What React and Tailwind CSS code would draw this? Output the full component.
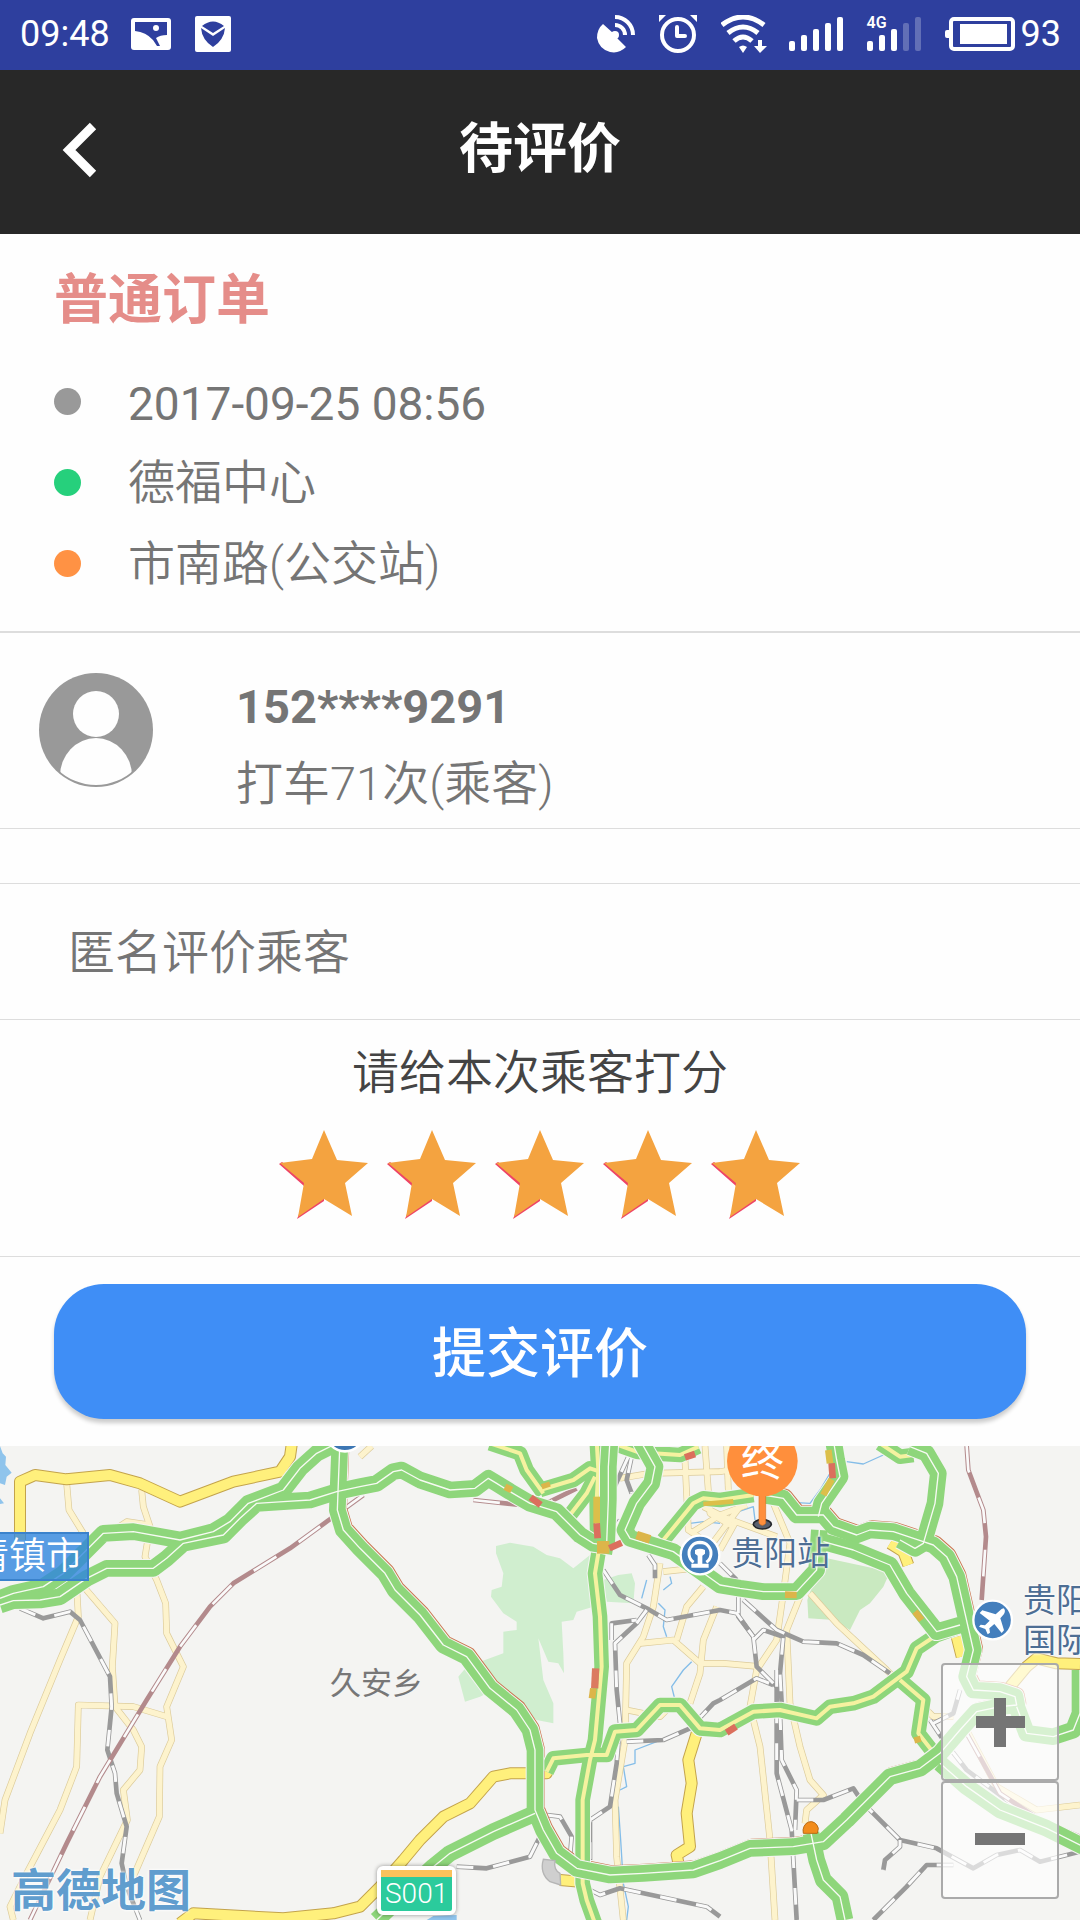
import React, { useState } from 'react';

const trip = [
  { text: '2017-09-25 08:56', dot: 'bg-[#999999]', style: 'pt-1 text-[46px]' },
  { text: '德福中心', dot: 'bg-[#26d07c]', style: 'font-[350]' },
  { text: '市南路(公交站)', dot: 'bg-[#ff9244]', style: 'font-[350]' },
];

// Map geometry, three units per pixel
const water = [
  '2540,65 2590,72 2650,45',
  '2490,100 2460,150 2430,190 2390,188',
  '2200,220 2260,200 2265,240',
  '2010,410 2015,430 1990,450',
  '1975,490 1995,510 1990,560 2000,590',
  '2075,665 2050,690 2015,740 2025,780',
  '1970,905 1905,930 1905,970 1870,980 1880,1040 1860,1050',
  '1855,1100 1862,1200 1870,1330 1885,1400 1880,1440',
  '1940,420 1925,475',
  '2070,250 2110,245 2160,250',
];

const lightRoads = [
  '200,130 207,210 250,280',
  '425,150 430,200 450,260 435,350 470,420 497,490 500,580 550,680 500,800 515,900 480,980 478,1130 400,1310',
  '350,265 380,245 450,255',
  '230,440 235,530 180,660 90,880 15,1080 0,1180',
  '255,445 345,550 337,680 345,800 400,870 425,920 420,990 370,1050 382,1140 300,1310 270,1440',
  '500,830 400,800 235,795 230,980 180,1110 80,1300 30,1400 40,1440',
  '1080,50 1115,18',
  '1980,370 1960,500 1930,590 1880,670 1875,900 1845,1080 1850,1250 1870,1440',
  '1860,115 1950,100 2160,95 2220,85',
  '2055,60 2065,270 2110,300',
  '2115,18 2130,220 2200,260',
  '1990,395 2080,385',
  '1920,610 2020,600 2100,670 2170,670 2280,680',
  '2110,440 2060,500 2030,600',
  '2150,500 2110,600 2100,700 2070,790',
  '1880,810 1980,830 2000,810',
  '2180,18 2185,150',
  '2080,275 2160,225 2240,195',
  '2110,200 2180,235 2330,290',
  '2130,320 2220,200',
  '2160,330 2210,240',
  '2320,190 2370,310 2350,460 2330,600 2270,690 2250,800 2280,920 2310,1200 2325,1440',
  '2400,470 2360,570 2370,790 2400,920 2430,1020 2470,1065 2420,1110 2415,1150',
  '2430,460 2510,550 2660,690 2800,830 2860,830',
  '2900,870 2990,1040 3110,1110 3240,1095',
];

const yellowRoads = [
  '60,300 60,125 105,105 200,118 330,105 420,130 540,185 700,125 840,95 870,50 877,0',
  '540,1450 580,1420 850,1435 1000,1420 1080,1400 1140,1340 1210,1260 1260,1200 1330,1130 1410,1090 1480,1010 1530,1000 1640,1000 1660,960',
  '2090,880 2065,960 2075,1030 2060,1120 2070,1220 2030,1245 2040,1290',
  '1680,1320 1740,1325',
  '1840,880 1830,930 1800,940',
  '2670,310 2710,335 2725,375',
  '2870,590 2885,650',
  '3030,740 3080,680 3110,655 3170,670 3240,672',
];

const greyRails = [
  '60,505 130,535 210,515 240,540 330,710 335,800 322,930 345,1000 350,1060 380,1160 365,1270 380,1340 420,1440',
  '1885,50 1830,170',
  '1895,50 1880,120 1895,160',
  '1860,240 1835,280',
  '1945,345 1965,375 1965,415',
  '1810,390 1860,465 1940,505 2000,540 2160,510 2210,520 2260,590 2270,680 2330,740',
  '1940,510 1910,550 1845,610 1850,750 1860,850 1850,970 1830,1100 1770,1140 1770,1260',
  '1835,600 1835,550 1910,540',
  '1880,905 1990,900 2070,865 2140,790 2160,780 2270,715 2320,735',
  '1370,1280 1460,1285 1590,1250 1620,1190',
  '1640,1125 1680,1130 1715,1190 1710,1250',
  '1770,1350 1800,1365 1860,1345 2120,1400 2160,1430',
  '2160,370 2210,420',
  '2215,470 2215,530 2260,590',
  '2230,480 2330,570 2410,605 2510,610 2590,645 2670,700',
  '2260,600 2290,570 2350,590 2340,700 2345,790',
  '2330,690 2330,1000 2375,1170 2390,1440',
  '2340,820 2345,960 2390,1050 2385,1170',
  '2390,1080 2470,1080 2560,1045 2590,1090 2700,1200 2810,1225 2920,1285 2990,1245 3060,1230 3120,1265 3240,1235',
  '2700,1200 2700,1220 2655,1260 2650,1290',
  '2860,1275 2780,1275 2720,1340 2620,1440',
  '2790,840 2830,900 2900,990 3100,1140',
  '2800,850 2860,820 2880,750',
];

const purpleRails = [
  '1090,165 980,245 870,325 700,430 630,500 540,620 440,780 300,1010 200,1210 90,1440',
  '1420,180 1560,195 1650,185 1730,145',
  '2900,18 2905,90 2950,210 2958,290 2945,480',
  '2900,880 3000,1060 3120,1140 3240,1190',
];

// Ring road and expressways with a white median
const motorways = [
  '0,475 40,460 130,440 190,400 250,340 310,280 400,275 540,300 640,275 690,245 745,190 850,150 900,85 950,40 1010,10',
  '0,495 40,482 120,480 180,470 260,415 320,385 460,385 500,355 550,310 670,285 720,235 770,190 850,185 930,180 1010,155 1080,140 1130,130 1180,95 1205,90 1260,120 1350,150 1425,145 1465,115 1490,130 1530,155 1590,190 1670,215 1740,285 1780,310 1840,320',
  '1020,0 1015,130 1012,210 1030,270 1080,325 1155,400 1185,450 1260,525 1330,615 1400,650 1470,745 1550,810 1590,870 1605,930 1605,1110 1630,1170 1670,1240 1730,1285 1830,1305 1930,1300 2080,1290 2160,1262 2250,1225 2380,1220 2470,1205 2540,1140 2610,1070 2670,1010 2760,985 2820,940 2880,870 2930,815 3000,800 3050,795 3045,770 3000,755 2920,750 2900,710 2920,630 2895,520 2870,410 2840,350 2800,315 2770,305 2680,275 2610,270 2570,285 2500,260 2470,225 2390,225 2350,175 2290,165',
  '1605,1120 1480,1175 1350,1240 1300,1280 1130,1440',
  '1920,0 1965,80 1955,130 1910,190 1875,270 1890,295 2020,335 2160,435 2220,445 2290,455 2390,455 2450,390 2458,270',
  '2455,230 2465,190 2520,110 2510,60 2500,0',
  '2730,20 2780,40 2815,100 2805,190 2770,310 2745,325 2700,300',
  '2470,305 2560,330 2670,375 2720,460 2810,575 2880,555',
  '3050,800 3080,880 3160,890 3220,870 3240,820 3240,690',
  '2820,970 2900,1040 3000,1110 3140,1165 3250,1220',
  '2433,1180 2450,1260 2470,1320 2520,1370 2535,1440',
  '1830,0 1825,80 1825,180 1820,310',
];

// City roads with a yellow middle
const trafficRoads = [
  '1790,0 1795,90 1790,180 1792,320',
  '1795,340 1785,400 1800,530 1805,680 1785,900 1770,960 1748,1080 1748,1330 1760,1380 1785,1450',
  '1470,10 1560,40 1580,90 1630,160',
  '1620,150 1720,120 1770,85 1800,95',
  '1710,225 1760,160 1785,110',
  '1990,300 2080,190 2110,175 2160,180 2260,165',
  '1840,10 1910,35 1960,40 2040,45 2095,20',
  '1640,995 1660,955 1760,945 1820,945 1845,875 1910,870 1980,795 2040,795 2100,865 2160,870 2260,815 2340,810 2450,835 2490,800 2560,790 2620,770 2720,695 2750,625 2810,585 2880,560',
  '2700,720 2770,780 2755,880 2810,950',
  '2640,10 2700,50 2740,45',
];

const jams = [
  { points: '1790,170 1790,250', color: '#dcbf4a', width: 20 },
  { points: '1790,250 1793,295', color: '#db6f5d', width: 20 },
  { points: '1791,322 1828,322', color: '#dcb54a', width: 38 },
  { points: '1828,325 1865,308', color: '#db6f5d', width: 20 },
  { points: '1787,685 1784,745', color: '#db7a60', width: 22 },
  { points: '1780,745 1776,775', color: '#dcb54a', width: 20 },
  { points: '1592,172 1622,195', color: '#db6f5d', width: 20 },
  { points: '1515,140 1535,150', color: '#dcb54a', width: 20 },
  { points: '1910,285 1950,298', color: '#dcb54a', width: 26 },
  { points: '2055,52 2085,42', color: '#db6f5d', width: 20 },
  { points: '1625,140 1650,132', color: '#dcb54a', width: 16 },
  { points: '2110,192 2200,184', color: '#dcbf4a', width: 14 },
  { points: '2485,30 2490,70', color: '#dcbf4a', width: 20 },
  { points: '2495,70 2498,115', color: '#db6f5d', width: 20 },
  { points: '2495,118 2470,165', color: '#dcbf4a', width: 20 },
  { points: '2355,464 2390,465', color: '#dcb54a', width: 20 },
  { points: '2745,515 2765,540', color: '#dcb54a', width: 20 },
  { points: '2750,890 2755,908', color: '#dcb54a', width: 20 },
  { points: '2180,878 2208,860', color: '#db6f5d', width: 20 },
];

function Lines({ list, color, width, dash }) {
  return (
    <g fill="none" stroke={color} strokeWidth={width} strokeLinejoin="round" strokeDasharray={dash}>
      {list.map((points) => (
        <polyline key={points} points={points} />
      ))}
    </g>
  );
}

function MapDrawing() {
  return (
    <svg viewBox="0 18 3240 1422" className="block h-auto w-full" aria-hidden="true">
      <rect x="0" y="0" width="3240" height="1440" fill="#f4f4f2" />
      <g fill="#d0eecf">
        <path d="M1488 318L1530 308L1600 320L1640 345L1680 355L1720 385L1770 345L1780 500L1730 515L1720 540L1685 545L1690 640L1692 700L1675 670L1645 665L1615 595L1630 720L1660 790L1660 850L1610 840L1530 790L1480 750L1440 770L1395 785L1375 710L1400 680L1510 640L1510 575L1550 570L1550 545L1510 520L1473 470L1475 450L1505 440L1510 400L1488 340Z" />
        <path d="M1810 420L1855 405L1895 400L1905 430L1900 490L1820 485Z" />
        <path d="M2460 350L2670 395L2650 440L2610 490L2580 510L2550 570L2500 540L2425 535L2422 480L2450 400Z" fill="#c9e9c0" />
      </g>
      <path d="M0 18L8 40L18 50L16 75L35 98L20 110L15 135L0 130ZM0 175L12 190L0 192ZM1280 1440L1300 1428L1370 1425L1370 1440Z" fill="#8fc4ec" />
      <Lines list={water} color="#84bde8" width={4} />
      <Lines list={lightRoads} color="#dccb9a" width={20} />
      <Lines list={lightRoads} color="#fdf3cd" width={16} />
      <Lines list={greyRails} color="#999999" width={14} />
      <Lines list={greyRails} color="#fafafa" width={9} dash="50 60" />
      <Lines list={purpleRails} color="#b38a8c" width={14} />
      <Lines list={purpleRails} color="#fafafa" width={8} dash="80 80" />
      <Lines list={yellowRoads} color="#c3a34c" width={36} />
      <Lines list={yellowRoads} color="#fff07c" width={30} />
      <g transform="translate(5 -5)">
        <Lines list={[motorways[2]]} color="#c9764e" width={48} />
      </g>
      <Lines list={trafficRoads} color="#f4f4f2" width={50} />
      <Lines list={trafficRoads} color="#8ed67b" width={44} />
      <Lines list={trafficRoads} color="#f5f2a0" width={12} />
      <Lines list={motorways} color="#f4f4f2" width={56} />
      <Lines list={motorways} color="#8ed67b" width={50} />
      <Lines list={motorways} color="#f7faf3" width={4} />
      {jams.map((jam) => (
        <polyline key={jam.points} points={jam.points} stroke={jam.color} strokeWidth={jam.width} fill="none" />
      ))}
      <path d="M2410 1180A22 26 0 0 1 2455 1165L2452 1180Z" fill="#f28c1c" stroke="#b96a14" strokeWidth="3" />
      <path d="M1630 1258Q1618 1300 1650 1325L1682 1335L1680 1300Q1660 1290 1665 1262Z" fill="#cfcfcf" stroke="#b5b5b5" strokeWidth="4" />

      {/* places */}
      <circle cx="1035" cy="-24" r="58" fill="#3c76b3" stroke="#ffffff" strokeWidth="8" />
      <g transform="translate(2100 345)">
        <circle r="58" fill="#447fbd" stroke="#ffffff" strokeWidth="7" />
        <path d="M-19 22A33 33 0 1 1 19 22" fill="none" stroke="#ffffff" strokeWidth="9" />
        <path d="M-15 -32L-9 -40H9L15 -32Z" fill="#ffffff" />
        <path d="M-15 -15Q0 -23 15 -15V-4L7 2V26H26V38H-26V26H-7V2L-15 -4Z" fill="#ffffff" />
      </g>
      <g transform="translate(2978 540)">
        <circle r="58" fill="#447fbd" stroke="#ffffff" strokeWidth="7" />
        <path d="M33 -35Q27 -35 20 -27L9 -17L-31 -29L-39 -21L-9 2L-23 16L-36 14L-41 20L-22 27L-15 43L-8 38L-10 25L5 12L27 39L34 31L23 -5L34 -18Q40 -28 33 -35Z" fill="#ffffff" />
      </g>

      {/* destination pin */}
      <ellipse cx="2287" cy="253" rx="27" ry="14" fill="#58606e" stroke="#23262c" strokeWidth="5" />
      <path d="M2277 150H2297V250Q2287 262 2277 250Z" fill="#ff8f3c" stroke="#d97428" strokeWidth="2" />
      <circle cx="2287" cy="63" r="106" fill="#ff8f3c" />
    </svg>
  );
}

function StatusBar() {
  return (
    <div className="flex h-[70px] items-center bg-[#2e3f9e] pr-[19px] pb-[3px] pl-[20px] text-[36px] leading-none text-white">
      <span>09:48</span>
      <svg viewBox="0 0 40 32" className="ml-[21px] h-8 w-10" aria-hidden="true">
        <rect width="40" height="32" rx="3" fill="#fff" />
        <path d="M4 4H36V17Q29 17 25 20L29 28H26L22 22Q15 14 4 13Z" fill="#2e3f9e" />
        <circle cx="25" cy="10" r="3" fill="#fff" />
      </svg>
      <svg viewBox="0 0 36 36" className="ml-6 h-9 w-9" aria-hidden="true">
        <rect width="36" height="36" rx="2" fill="#fff" />
        <path d="M7 10Q18 1 29 10L18 17ZM6 12L18 20L30 12Q29 24 18 31Q7 24 6 12Z" fill="#2e3f9e" />
      </svg>

      <svg viewBox="0 0 38 38" className="ml-auto h-[38px] w-[38px]" aria-hidden="true">
        <path d="M6 9L16 18A4 4 0 0 1 20 23L29 32Q22 39 13 37Q2 34 0 23Q0 14 6 9Z" fill="#fff" />
        <circle cx="18" cy="20" r="4" fill="#fff" />
        <path d="M18 10A10 10 0 0 1 28 20M18 2A18 18 0 0 1 36 20" fill="none" stroke="#fff" strokeWidth="4" />
      </svg>
      <svg viewBox="0 0 38 38" className="ml-6 h-[38px] w-[38px]" aria-hidden="true">
        <circle cx="19" cy="20" r="16" fill="none" stroke="#fff" strokeWidth="4" />
        <path d="M18 12V21H26" fill="none" stroke="#fff" strokeWidth="4" strokeLinecap="round" strokeLinejoin="round" />
        <path d="M0 0H7L0 7ZM38 0H31L38 7Z" fill="#fff" />
      </svg>
      <svg viewBox="0 0 46 38" className="ml-6 h-[38px] w-[46px]" aria-hidden="true">
        <path d="M1 10Q22 -6 43 10M7 18Q22 6 37 18M13 26Q22 18 31 26" fill="none" stroke="#fff" strokeWidth="5" />
        <path d="M18 32Q22 29 26 32L22 38ZM37 25H41V31H46L39 38L33 31H37Z" fill="#fff" />
      </svg>
      <svg viewBox="0 0 55 34" className="ml-[22px] h-[34px] w-[55px]" fill="#fff" aria-hidden="true">
        <rect x="0" y="24" width="6" height="10" rx="2" />
        <rect x="12" y="18" width="6" height="16" rx="2" />
        <rect x="24" y="12" width="6" height="22" rx="2" />
        <rect x="36" y="6" width="6" height="28" rx="2" />
        <rect x="48" y="0" width="6" height="34" rx="2" />
      </svg>
      <div className="relative ml-[23px]">
        <span className="absolute top-[-2px] left-0 text-[16px] leading-none font-semibold">4G</span>
        <svg viewBox="0 0 54 34" className="h-[34px] w-[54px]" fill="#fff" aria-hidden="true">
          <rect x="0" y="24" width="6" height="10" rx="2" />
          <rect x="12" y="18" width="6" height="16" rx="2" />
          <rect x="24" y="12" width="6" height="22" rx="2" />
          <rect x="36" y="6" width="6" height="28" rx="2" opacity="0.25" />
          <rect x="48" y="0" width="6" height="34" rx="2" opacity="0.25" />
        </svg>
      </div>
      <svg viewBox="0 0 70 34" className="mr-[6px] ml-6 h-[34px] w-[70px]" aria-hidden="true">
        <rect x="6" y="2" width="62" height="30" rx="3" fill="none" stroke="#fff" strokeWidth="4" />
        <rect x="15" y="7" width="47" height="20" fill="#fff" />
        <rect x="0" y="13" width="6" height="8" rx="2" fill="#fff" />
      </svg>
      <span>93</span>
    </div>
  );
}

function Star({ filled }) {
  return (
    <svg viewBox="0 0 108 90" className="block h-[90px] w-full" aria-hidden="true">
      <path d="M9 34L34 56L36 50L12 32ZM27 89L54 71V64L29 84Z" fill={filled ? '#ee4466' : '#cccccc'} />
      <path d="M54 0L67 30L98 33L75 53L82 86L54 69L28 87L34 53L10 33L42 29Z" fill={filled ? '#f4a340' : '#dddddd'} />
    </svg>
  );
}

const App = () => {
  const [score, setScore] = useState(5);

  return (
    <div className="bg-[#fefefe] font-[Roboto,'Noto_Sans_CJK_SC',sans-serif] text-[47px] text-[#757575]">
      <StatusBar />

      <header className="relative flex h-[164px] items-center justify-center bg-[#282828] pb-1">
        <button type="button" aria-label="返回" className="absolute left-[60px] flex h-[60px] w-10 items-center justify-center">
          <svg viewBox="0 0 40 60" className="h-[60px] w-10" aria-hidden="true">
            <path d="M33 6L9 30L33 54" fill="none" stroke="#fff" strokeWidth="9" />
          </svg>
        </button>
        <h1 className="text-[54px] leading-none font-bold text-white">待评价</h1>
      </header>

      <main>
        <section className="border-b-2 border-[#dddddd] px-[54px] pt-[27px] pb-[27px]">
          <h2 className="mb-5 text-[54px] leading-[80px] font-bold text-[#e58d89]">普通订单</h2>
          <ul>
            {trip.map((item) => (
              <li key={item.text} className="flex h-[81px] items-center">
                <span className={`mr-[47px] h-[27px] w-[27px] rounded-full ${item.dot}`}></span>
                <span className={`leading-none ${item.style}`}>{item.text}</span>
              </li>
            ))}
          </ul>
        </section>

        <section className="flex border-b border-[#dddddd] pt-[35px] pb-[6px] pl-[39px]">
          <svg viewBox="0 0 115 115" className="mt-[5px] h-[115px] w-[115px]" aria-hidden="true">
            <circle cx="57" cy="57" r="57" fill="#999999" />
            <clipPath id="face">
              <circle cx="57" cy="57" r="55" />
            </clipPath>
            <circle cx="57" cy="41" r="23" fill="#fefefe" />
            <ellipse cx="57" cy="103" rx="36" ry="38" fill="#fefefe" clipPath="url(#face)" />
          </svg>
          <div className="ml-[82px] leading-[77px]">
            <p className="font-bold">152****9291</p>
            <p className="font-[350]">打车71次(乘客)</p>
          </div>
        </section>

        <div className="h-[55px] border-b border-[#dddddd]"></div>

        <p className="border-b border-[#dddddd] px-[68px] pt-[2px] leading-[133px] font-[350]">匿名评价乘客</p>

        <section className="flex flex-col items-center border-b border-[#dddddd] pt-[13px] pb-[36px]">
          <p className="leading-[80px] font-[350] text-[#444444]">请给本次乘客打分</p>
          <div className="mt-[17px] flex">
            {[1, 2, 3, 4, 5].map((n) => (
              <button key={n} type="button" aria-label={`${n}星`} className="w-[108px]" onClick={() => setScore(n)}>
                <Star filled={n <= score} />
              </button>
            ))}
          </div>
        </section>

        <div className="px-[54px] pt-[27px] pb-[27px]">
          <button
            type="button"
            className="block h-[135px] w-full rounded-[50px] bg-[#3f8ef6] pt-[6px] text-[54px] leading-none font-medium text-white shadow-[0_4px_4px_rgba(0,0,0,0.2)]"
          >
            提交评价
          </button>
        </div>

        <section className="relative overflow-hidden">
          <MapDrawing />
          <span className="absolute top-[86px] left-[-34px] border-2 border-[#3a82cc] bg-[#2f86de]/80 pr-1 pl-1 text-[37px] leading-[45px] font-[350] text-white">清镇市</span>
          <span className="absolute top-[218px] left-[330px] text-[31px] leading-[40px] text-[#777777]">久安乡</span>
          <span className="absolute top-[88px] left-[731px] text-[33px] leading-[40px] text-[#4d6e94] [text-shadow:0_0_3px_#fff,0_0_3px_#fff]">贵阳站</span>
          <p className="absolute top-[135px] left-[1023px] text-[33px] leading-[40px] whitespace-nowrap text-[#4d6e94] [text-shadow:0_0_3px_#fff,0_0_3px_#fff]">
            贵阳
            <br />
            国际
          </p>
          <span className="absolute top-[-10px] left-[741px] text-[43px] leading-[50px] text-white">终</span>
          <span className="absolute top-[420px] left-[377px] rounded-[6px] border-4 border-white bg-[#2bcb9c] shadow-[0_0_4px_rgba(0,0,0,0.4)]">
            <span className="block h-[7px] bg-[#f9c25c]"></span>
            <span className="block px-[4px] text-[28px] leading-[34px] font-light text-white">S001</span>
          </span>
          <span className="absolute top-[421px] left-[11px] text-[45px] leading-[50px] font-bold text-[#4a90c8]/90 [text-shadow:0_0_3px_#fff,0_0_3px_#fff]">高德地图</span>

          <div className="absolute right-[21px] bottom-[21px] flex flex-col">
            <button type="button" aria-label="放大" className="h-[118px] w-[118px] rounded-[4px] border-2 border-[#aaaaaa] bg-white/65">
              <svg viewBox="0 0 114 114" className="h-full w-full" aria-hidden="true">
                <path d="M33 57H82M57 33V82" stroke="#757575" strokeWidth="12" />
              </svg>
            </button>
            <button type="button" aria-label="缩小" className="h-[118px] w-[118px] rounded-[4px] border-2 border-[#aaaaaa] bg-white/65">
              <svg viewBox="0 0 114 114" className="h-full w-full" aria-hidden="true">
                <path d="M32 56H82" stroke="#757575" strokeWidth="12" />
              </svg>
            </button>
          </div>
        </section>
      </main>
    </div>
  );
};

export default App;
